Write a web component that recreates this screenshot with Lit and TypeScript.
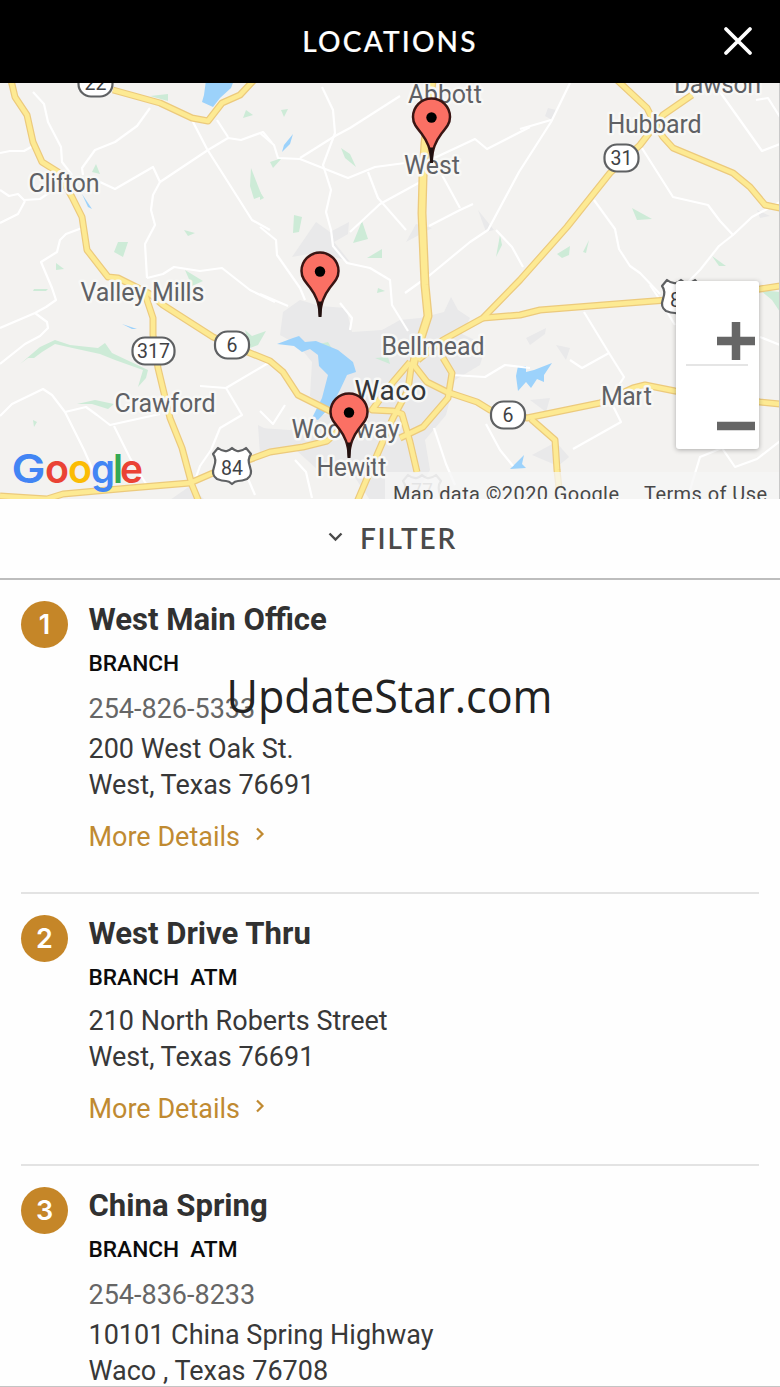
import { css, html, svg, LitElement } from 'lit';
import { customElement, property } from 'lit/decorators.js';

interface Place {
  name: string;
  tags: string[];
  phone?: string;
  street: string;
  city: string;
}

const places: Place[] = [
  { name: 'West Main Office', tags: ['BRANCH'], phone: '254-826-5333', street: '200 West Oak St.', city: 'West, Texas 76691' },
  { name: 'West Drive Thru', tags: ['BRANCH', 'ATM'], street: '210 North Roberts Street', city: 'West, Texas 76691' },
  { name: 'China Spring', tags: ['BRANCH', 'ATM'], phone: '254-836-8233', street: '10101 China Spring Highway', city: 'Waco , Texas 76708' },
];

const highways = [
  'M11 80L15 97L27 115L33 142L42 162L58 172L72 197L82 217L87 250L108 277L118 278L150 294L163 305L213 337L250 353L270 361L283 372L298 395L330 411L345 413',
  'M145 294L153 318L153 335L158 368L170 418L182 448L192 485L199 502',
  'M0 496L47 499L63 494L130 488L190 483L213 473L270 452L303 447L327 441L345 425',
  'M113 90L160 103L192 118L208 121L222 103L240 95L254 80',
  'M692 95L663 115L640 145L610 173L567 227L520 280L483 318L443 340L418 360',
  'M483 318L520 315L540 310L603 305L680 299L760 289L780 286',
  'M617 80L647 108L653 120L663 137L673 148L733 173L750 187L765 205L780 208',
  'M413 364L427 382L447 392L477 402L490 410L527 418L600 403L633 388L645 385L675 391L760 402L780 404',
  'M531 419L555 440L557 470L559 488',
  'M443 358L452 373L448 398L423 427L400 438',
  'M410 362L393 382L372 410L393 411L402 414L410 442L417 472',
  'M428 316L417 350L411 368L408 390L393 418L377 455L357 502',
];

const interstate = 'M432 80L428 120L425 143L423 177L422 213L425 285L428 316L417 350L413 366';

const backroads = [
  'M33 92L44 104L48 122L61 147L62 162L72 175', 'M0 153L10 151L24 151L33 146', 'M0 190L9 196L18 194L24 200L40 199L56 188', 'M25 201L18 214L0 223',
  'M150 108L137 126L115 142L95 150L82 168L83 175', 'M100 182L115 189L153 167L160 182L208 150L228 138L241 140L263 132L272 143',
  'M160 182L153 195L151 210L155 225L145 244L147 278', 'M192 120L207 149L240 201L252 220L270 230',
  'M217 120L228 137', 'M82 228L66 234L60 240L57 252L41 262L52 288L56 300L46 307L35 313L0 328', 'M35 313L47 322L48 328L40 336L25 344L0 364',
  'M147 278L163 274L174 267L200 271L222 268L250 290L275 302', 'M0 416L12 404L43 389L52 395L65 412L84 450L95 475',
  'M65 412L86 407L97 415L110 425L160 414', 'M114 426L130 458L148 487', 'M200 386L226 388L270 362', 'M226 388L242 415L220 428L211 450L200 466L195 480',
  'M322 87L333 110L335 133L323 165L331 190L326 212L331 230L333 246L347 263L370 268L390 280L392 305L408 331',
  'M260 133L274 145L278 158L300 159L348 178L375 167L420 161', 'M300 158L335 136L350 128L400 96', 'M368 172L378 198L406 230',
  'M350 232L380 204L424 180', 'M429 226L460 210L473 204', 'M442 175L460 208', 'M430 160L475 139L487 149L530 127',
  'M570 83L551 122L519 172L488 230L470 242L430 275L405 293', 'M551 120L520 129', 'M496 230L512 247L523 267',
  'M640 145L673 197L708 205L720 221L733 235L752 217L780 202', 'M733 235L719 246L700 270L685 285',
  'M594 200L615 229L619 249L630 266L640 273L660 294', 'M720 92L762 151L780 144', 'M756 100L768 98L780 117',
  'M584 312L609 353L624 377L610 400L621 422L573 449', 'M609 353L582 368L570 360', 'M260 227L276 240L277 255L300 288L305 300',
  'M260 294L288 306', 'M260 411L273 424L285 405', 'M452 375L485 377L505 365L530 368', 'M434 428L446 464L455 485', 'M486 424L500 450L513 466',
  'M295 460L306 472L312 498', 'M690 490L700 457L722 448L735 467L757 459L780 441', 'M760 337L780 345', 'M650 285L660 300L675 325',
  'M240 460L255 495', 'M340 303L352 318L350 330',
];

const urban = [
  'M283 312L300 300L320 306L346 308L352 332L382 330L400 320L420 318L444 312L451 297L458 310L470 318L462 334L486 345L480 365L455 380L446 415L425 440L430 470L412 500L370 500L350 470L318 470L296 450L260 458L260 428L290 430L330 412L310 396L312 362L298 345L280 335Z',
  'M292 257L305 238L316 222L330 232L349 222L348 234L334 242L350 262L320 252Z', 'M406 242L416 224L432 228Z',
  'M478 210L494 230L486 232Z', 'M532 455L556 442L569 457L558 466Z', 'M548 108L556 110L552 120L545 116Z', 'M757 210L770 216L760 218Z',
  'M526 338L546 328L545 334L530 345Z', 'M530 400L550 398L546 412Z', 'M556 345L570 348L566 360Z', 'M258 425L272 432L272 454L260 455Z', 'M170 500L190 486L205 500Z',
];

const parks = [
  'M96 164L100 174L92 172Z', 'M118 242L128 242L123 257L114 252Z', 'M251 168L262 196L254 199L250 186Z', 'M150 96L168 94L168 101Z',
  'M56 263L64 269L56 270Z', 'M185 270L203 281L192 286Z', 'M184 230L195 233L188 236Z', 'M341 148L350 154L356 167L345 158Z',
  'M294 215L302 217L299 232L293 233Z', 'M353 243L362 221L368 239Z', 'M367 258L382 249L382 258Z', 'M500 235L502 245L496 257Z',
  'M557 254L570 246L569 255L562 258Z', 'M589 240L583 252L586 253Z', 'M632 208L652 219L637 220Z', 'M712 256L726 266L719 266Z',
  'M20 364L40 347L55 340L70 345L98 348L105 343L112 353L148 370L146 378L138 387L143 370L115 360L100 354L68 347L55 344L42 352L34 358L28 358Z',
  'M77 404L95 400L114 404L108 409L92 404Z', 'M245 330L252 336L266 331L258 345L250 348Z', 'M270 162L282 158L273 168Z', 'M246 110L253 115L243 118Z',
  'M281 110L288 109L284 117Z', 'M378 288L385 291L377 293Z', 'M375 358L388 357L390 364Z', 'M315 345L328 342L334 352Z', 'M760 290L780 292L780 312L772 300Z', 'M33 420L37 422L34 427Z',
  'M260 192L264 198L260 200Z', 'M34 289L48 289L46 291L33 291Z',
];

const lakes = [
  'M206 80L204 95L202 102L213 107L220 98L231 88L234 80Z', 'M277 344L293 338L299 336L305 342L316 341L338 350L353 362L356 372L347 375L340 390L332 405L318 420L312 418L322 398L328 375L319 366L318 355L310 349L302 352L294 346Z',
  'M518 366L526 366L526 372L534 370L552 363L544 375L544 382L537 379L531 388L526 382L518 391L516 376Z', 'M510 469L524 455L522 464L526 468Z',
  'M284 145L293 134L290 144L282 152Z', 'M82 194L92 209L88 207Z', 'M122 324L137 329L132 329Z',
];

const labels = [
  { text: 'Abbott', x: 408, y: 102.5, w: 74 }, { text: 'West', x: 404, y: 174, w: 56 }, { text: 'Hubbard', x: 607.5, y: 132.5, w: 94 },
  { text: 'Dawson', x: 674, y: 92.5, w: 87 }, { text: 'Clifton', x: 28.5, y: 191.5, w: 71 }, { text: 'Valley Mills', x: 80.5, y: 301, w: 124 },
  { text: 'Crawford', x: 114.5, y: 412, w: 101 }, { text: 'Bellmead', x: 381.5, y: 355, w: 103 }, { text: 'Woodway', x: 291.5, y: 437.5, w: 108 },
  { text: 'Hewitt', x: 316.5, y: 475.5, w: 70 }, { text: 'Mart', x: 601, y: 405, w: 51 },
];

const ovals = [
  { text: '22', x: 95.5, y: 83, w: 34 }, { text: '31', x: 621.5, y: 158, w: 34 }, { text: '317', x: 153.5, y: 351, w: 42 },
  { text: '6', x: 232, y: 345, w: 34 }, { text: '6', x: 508, y: 415, w: 34 },
];

const shields = [{ text: '84', x: 232, y: 466 }, { text: '84', x: 681, y: 298 }];

const pins = [{ x: 431.5, y: 117.5 }, { x: 320, y: 271.5 }, { x: 349, y: 412.5 }];

const logo = [
  { c: 'G', x: 11.5, w: 34, fill: '#4285f4' }, { c: 'o', x: 45, w: 24, fill: '#ea4335' }, { c: 'o', x: 68, w: 24, fill: '#fbbc05' },
  { c: 'g', x: 91, w: 24, fill: '#4285f4' }, { c: 'l', x: 113, w: 10, fill: '#34a853' }, { c: 'e', x: 120, w: 23, fill: '#ea4335' },
];

const shieldPath = 'M-14 -18Q-9 -14 -5 -15Q-2 -16 0 -18Q2 -16 5 -15Q9 -14 14 -18L19 -12Q15 -7 18 1Q21 9 15 13Q10 15 6 15Q3 15 0 18Q-3 15 -6 15Q-10 15 -15 13Q-21 9 -18 1Q-15 -7 -19 -12Z';

@customElement('location-map')
export class LocationMap extends LitElement {

  static get styles() {
    return css`
        :host {
          display: block;
          position: relative;
          height: 416px;
          overflow: hidden;
          font-family: Roboto, sans-serif;
        }

        .map {
          display: block;
          width: 780px;
          height: 416px;
        }

        .road {
          fill: none;
          stroke-linejoin: round;
        }

        .back {
          stroke: #fff;
          stroke-width: 2.2px;
        }

        .casing {
          stroke: #ecca7c;
          stroke-width: 7px;
        }

        .core {
          stroke: #fdea93;
          stroke-width: 4.6px;
        }

        .casing.wide {
          stroke-width: 9px;
        }

        .core.wide {
          stroke-width: 6.4px;
        }

        .label {
          font-size: 25px;
          fill: #5f6165;
          stroke: #f8f8f6;
          stroke-width: 5px;
          stroke-linejoin: round;
          paint-order: stroke;
        }

        .city {
          font-size: 28px;
          fill: #35373a;
        }

        .sign {
          fill: #fff;
          stroke: #5f6163;
          stroke-width: 2.2px;
          stroke-linejoin: round;
        }

        .number {
          font-size: 19.5px;
          fill: #3f4144;
          text-anchor: middle;
        }

        .faded {
          opacity: 0.35;
        }

        .pin {
          fill: #fb7064;
          stroke: #3a1513;
          stroke-width: 2.5px;
          stroke-linejoin: round;
        }

        .logo {
          font: 600 40px Inter, sans-serif;
        }

        .legal {
          font-size: 20px;
          fill: #484848;
        }

        .zoom {
          position: absolute;
          top: 198px;
          right: 21px;
          width: 83px;
          height: 168px;
          background: #fff;
          border-radius: 3px;
          box-shadow: 0 1px 5px rgba(0, 0, 0, 0.3);
        }
        `;
  }

  render() {
    return html`
            <svg class="map" viewBox="0 83 780 416">
                <rect y="83" width="780" height="416" fill="#f3f2f0" />
                ${urban.map(d => svg`<path d=${d} fill="#e9e9ea" />`)}
                ${parks.map(d => svg`<path d=${d} fill="#cdebd7" />`)}
                ${lakes.map(d => svg`<path d=${d} fill="#9cd2fb" />`)}
                ${backroads.map(d => svg`<path class="road back" d=${d} />`)}
                ${highways.map(d => svg`<path class="road casing" d=${d} />`)}
                <path class="road casing wide" d=${interstate} />
                ${highways.map(d => svg`<path class="road core" d=${d} />`)}
                <path class="road core wide" d=${interstate} />
                ${labels.map(l => svg`<text class="label" x=${l.x} y=${l.y} textLength=${l.w}>${l.text}</text>`)}
                <text class="label city" x="354.500" y="400" textLength="72">Waco</text>
                ${ovals.map(o => svg`
                    <rect class="sign" x=${o.x - o.w / 2} y=${o.y - 13.5} width=${o.w} height="27" rx="12.5" />
                    <text class="number" x=${o.x} y=${o.y + 7}>${o.text}</text>`)}
                ${shields.map(s => svg`
                    <g transform="translate(${s.x} ${s.y})">
                        <path class="sign" d=${shieldPath} />
                        <text class="number" y="8.500">${s.text}</text>
                    </g>`)}
                <g class="faded" transform="translate(422 493)">
                    <path class="sign" d=${shieldPath} />
                    <text class="number" y="5">77</text>
                </g>
                ${pins.map(p => svg`
                    <g transform="translate(${p.x} ${p.y})">
                        <path class="pin" d="M0 44C-1 31 -4 24 -10 16C-15 10 -18.500 6 -18.500 -0.500A18.500 18.500 0 0 1 18.500 -0.500C18.500 6 15 10 10 16C4 24 1 31 0 44Z" />
                        <path d="M-2 30L2 30L1.500 45.500L-1.500 45.500Z" fill="#20100f" />
                        <circle r="5.200" />
                    </g>`)}
                <rect x="385" y="472" width="395" height="27" fill="#f5f5f5" fill-opacity="0.75" />
                <text class="legal" x="393" y="501" textLength="226">Map data ©2020 Google</text>
                <text class="legal" x="644" y="501" textLength="123">Terms of Use</text>
                ${logo.map(l => svg`<text class="logo" x=${l.x} y="483" textLength=${l.w} lengthAdjust="spacingAndGlyphs" fill=${l.fill}>${l.c}</text>`)}
                <path d="M779.500 83V499" stroke="#c9c9c9" />
            </svg>
            <svg class="zoom" viewBox="0 0 83 168">
                <path d="M10 84H72" stroke="#dcdcdc" stroke-width="1.500" />
                <path d="M41 60H79M60 41V79M41 145H79" stroke="#666" stroke-width="8.500" />
            </svg>
        `;
  }
}

@customElement('location-item')
export class LocationItem extends LitElement {

  @property({ attribute: false })
  place!: Place;

  @property({ type: Number })
  number = 1;

  static get styles() {
    return css`
        :host {
          display: flex;
          gap: 20.5px;
          padding: 21px 0 37.5px;
          border-bottom: 2px solid #e3e3e3;
          font: 27px/35.5px Roboto, sans-serif;
          color: #383838;
        }

        .badge {
          display: flex;
          align-items: center;
          justify-content: center;
          flex: none;
          width: 47px;
          height: 47px;
          border-radius: 50%;
          background: #c58628;
          color: #fff;
          font: 600 27px Inter, sans-serif;
        }

        .name {
          margin: 0;
          font-size: 31.1px;
          line-height: 38px;
          font-weight: bold;
          color: #313131;
        }

        .tags {
          display: flex;
          gap: 11px;
          margin: 9px 0 11px;
          font-size: 22.7px;
          line-height: 31px;
          font-weight: 500;
          color: #0c0c0c;
        }

        .phone {
          margin: 13px 0 4.5px;
          color: #666;
        }

        .more {
          display: flex;
          gap: 15px;
          margin-top: 15.5px;
          line-height: 36px;
          color: #c08a31;
        }

        .arrow {
          width: 10px;
          height: 14px;
          margin-top: 8px;
          fill: none;
          stroke: currentColor;
          stroke-width: 2.2px;
        }
        `;
  }

  render() {
    return html`
            <div class="badge">${this.number}</div>
            <div class="info">
                <h2 class="name">${this.place.name}</h2>
                <div class="tags">${this.place.tags.map(tag => html`<span>${tag}</span>`)}</div>
                ${this.place.phone ? html`<div class="phone">${this.place.phone}</div>` : ''}
                <div>${this.place.street}</div>
                <div>${this.place.city}</div>
                <div class="more">
                    <span>More Details</span>
                    <svg class="arrow" viewBox="0 0 10 14"><path d="M2 1.500L7.500 7L2 12.500" /></svg>
                </div>
            </div>
        `;
  }
}

@customElement('app-root')
export class AppRoot extends LitElement {

  static get styles() {
    return css`
        :host {
          display: block;
          position: relative;
          box-sizing: border-box;
          width: 780px;
          height: 1387px;
          overflow: hidden;
          background: #fefefe;
          border-bottom: 1px solid #c4c4c4;
        }

        .header {
          display: grid;
          grid-template-columns: 1fr auto 1fr;
          align-items: center;
          box-sizing: border-box;
          height: 83px;
          padding-bottom: 2px;
          background: #000;
          color: #fff;
        }

        .title {
          grid-column: 2;
          margin: 0;
          font: 500 28px Lato, sans-serif;
          letter-spacing: 2.2px;
          -webkit-text-stroke: 0.2px #fff;
        }

        .close {
          justify-self: end;
          width: 30px;
          height: 30px;
          margin-right: 27px;
          stroke: #fff;
          stroke-width: 3.8px;
          stroke-linecap: round;
        }

        .filter {
          display: flex;
          align-items: center;
          justify-content: center;
          gap: 17px;
          box-sizing: border-box;
          height: 81px;
          padding: 0 0 2px 5px;
          border-bottom: 2px solid #bdbdbd;
          color: #4a4a4a;
          font: 600 28px Lato, sans-serif;
          letter-spacing: 1.8px;
        }

        .chevron {
          width: 15px;
          height: 10px;
          margin-top: -2px;
          fill: none;
          stroke: currentColor;
          stroke-width: 2.4px;
        }

        .list {
          padding: 0 21px;
        }

        .watermark {
          position: absolute;
          top: 650px;
          left: 210px;
          width: 360px;
          height: 100px;
          font: 45px "Open Sans", sans-serif;
          fill: #222;
        }
        `;
  }

  render() {
    return html`
            <header class="header">
                <h1 class="title">LOCATIONS</h1>
                <svg class="close" viewBox="0 0 30 30"><path d="M3 3L27 27M27 3L3 27" /></svg>
            </header>
            <location-map></location-map>
            <div class="filter">
                <svg class="chevron" viewBox="0 0 15 10"><path d="M1.500 1.500L7.500 7.500L13.500 1.500" /></svg>
                <span>FILTER</span>
            </div>
            <div class="list">
                ${places.map((place, i) => html`<location-item .place=${place} .number=${i + 1}></location-item>`)}
            </div>
            <svg class="watermark"><text x="16.500" y="63" textLength="326" lengthAdjust="spacingAndGlyphs">UpdateStar.com</text></svg>
        `;
  }
}
